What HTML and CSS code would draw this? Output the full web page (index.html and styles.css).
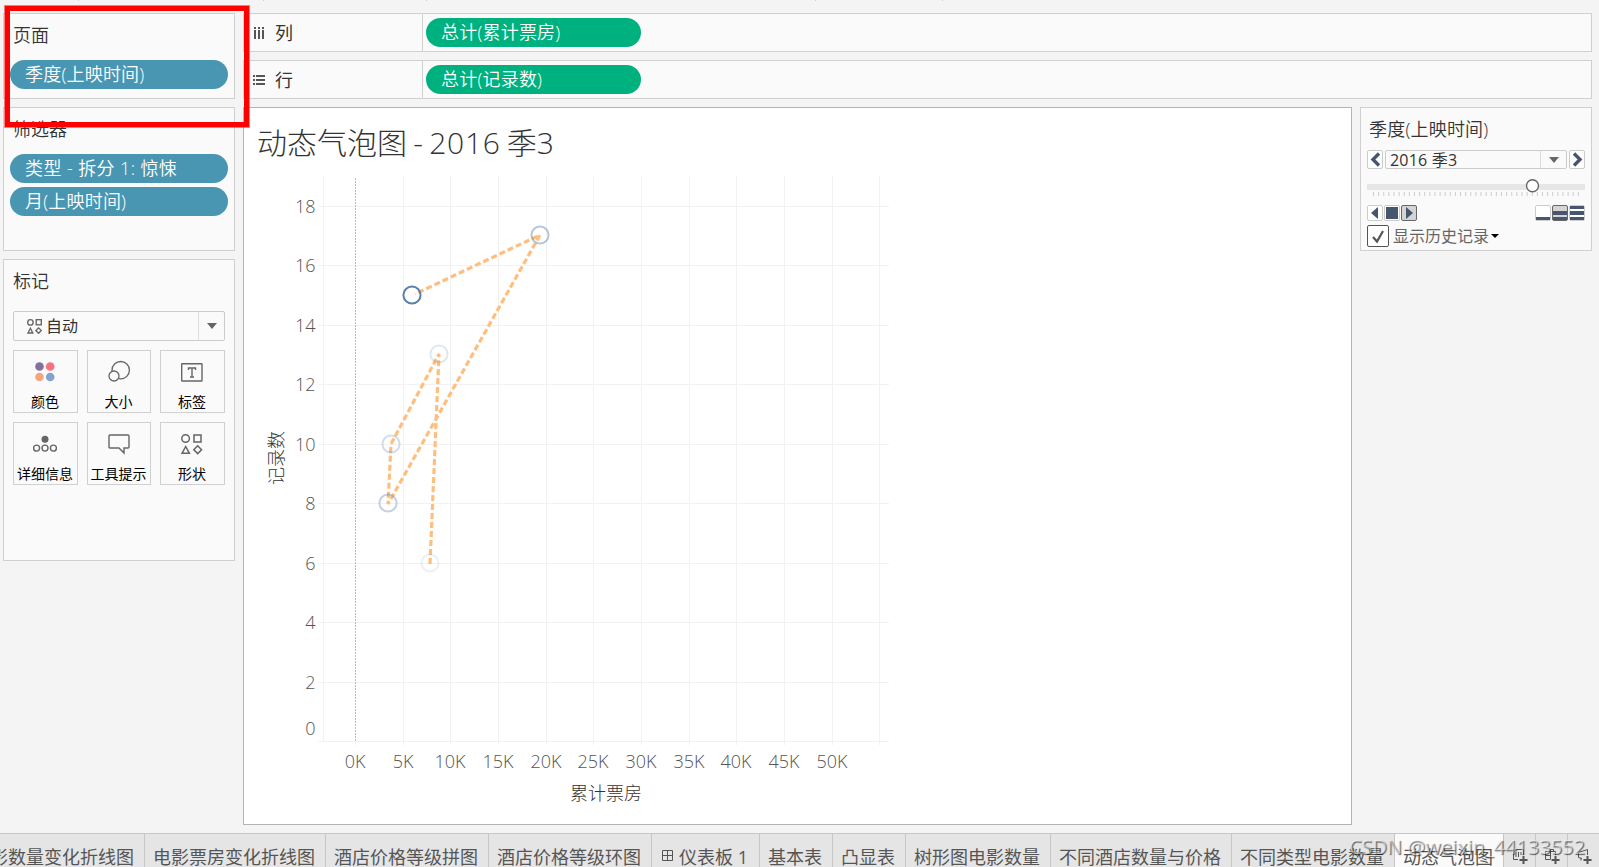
FILE: index.html
```html
<!DOCTYPE html>
<html lang="zh-CN">
<head>
    <meta charset="UTF-8">
    <meta name="viewport" content="width=device-width, initial-scale=1.0">
    <title>动态气泡图</title>
    <link rel="stylesheet" href="styles.css">
</head>
<body>
    <!-- bottom edge of the toolbar separators -->
    <div class="toolbar"><i></i><i></i><i></i><i></i><i></i></div>

    <div class="workspace">
        <div class="cards">
            <div class="card pages">
                <div class="card-title">页面</div>
                <div class="pill blue">季度(上映时间)</div>
            </div>
            <div class="card filters">
                <div class="card-title">筛选器</div>
                <div class="pill blue wide">类型 - 拆分 1: 惊悚</div>
                <div class="pill blue">月(上映时间)</div>
            </div>
            <div class="card marks">
                <div class="card-title">标记</div>
                <div class="mark-type">
                    <svg width="15" height="15" viewBox="0 0 22 22" fill="none" stroke="#666" stroke-width="2">
                        <circle cx="5" cy="5" r="4"/><rect x="13.5" y="1" width="7.5" height="7.5"/>
                        <path d="M1.5 20.5L5 13.5L8.5 20.5Z"/><path d="M17 13L21 17L17 21L13 17Z"/>
                    </svg>
                    <span>自动</span>
                    <div class="arrow"><i></i></div>
                </div>
                <div class="mark-grid">
                    <div class="mark">
                        <svg width="24" height="24" viewBox="0 0 24 24">
                            <circle cx="6.5" cy="6.5" r="4.3" fill="#85709c"/><circle cx="17.2" cy="6.5" r="4.3" fill="#fb7080"/>
                            <circle cx="6.5" cy="17" r="4.3" fill="#f4a77c"/><circle cx="17.2" cy="17" r="4.3" fill="#80a4cb"/>
                        </svg>
                        <span>颜色</span>
                    </div>
                    <div class="mark">
                        <svg width="24" height="24" viewBox="0 0 24 24" fill="#fafafa" stroke="#666" stroke-width="1.3">
                            <circle cx="13.7" cy="10.2" r="8.7"/><circle cx="7" cy="16" r="5"/>
                        </svg>
                        <span>大小</span>
                    </div>
                    <div class="mark">
                        <svg width="24" height="24" viewBox="0 0 24 24" fill="none" stroke="#666" stroke-width="1.4">
                            <rect x="1.7" y="3.7" width="20.3" height="17.3" rx=".5"/>
                            <path d="M8.5 10V8H15.5V10M12 8V17M10 17H14"/>
                        </svg>
                        <span>标签</span>
                    </div>
                    <div class="mark">
                        <svg width="24" height="24" viewBox="0 0 24 24" fill="none" stroke="#666" stroke-width="1.4">
                            <circle cx="12" cy="7.2" r="3.5" fill="#666" stroke="none"/>
                            <circle cx="3.6" cy="16.1" r="3"/><circle cx="12" cy="16.1" r="3"/><circle cx="20.4" cy="16.1" r="3"/>
                        </svg>
                        <span>详细信息</span>
                    </div>
                    <div class="mark">
                        <svg width="24" height="24" viewBox="0 0 24 24" fill="none" stroke="#666" stroke-width="1.4">
                            <path d="M3 3H21Q22 3 22 4V15Q22 16 21 16H17V21L12 16H3Q2 16 2 15V4Q2 3 3 3Z"/>
                        </svg>
                        <span>工具提示</span>
                    </div>
                    <div class="mark">
                        <svg width="24" height="24" viewBox="0 0 24 24" fill="none" stroke="#666" stroke-width="1.5">
                            <circle cx="5.6" cy="6.5" r="3.8"/><rect x="14" y="3" width="7" height="7"/>
                            <path d="M2 21.3L5.7 14.5L9.4 21.3Z"/><path d="M17.7 13.8L21.6 17.7L17.7 21.6L13.8 17.7Z"/>
                        </svg>
                        <span>形状</span>
                    </div>
                </div>
            </div>
        </div>

        <div class="main">
            <div class="shelf">
                <div class="shelf-name">
                    <svg width="12" height="12" viewBox="0 0 12 12" fill="#555"><path d="M1 0h2v2H1zM5 0h2v2H5zM9 0h2v2H9zM1 3h2v9H1zM5 3h2v9H5zM9 3h2v9H9z"/></svg>
                    <span>列</span>
                </div>
                <div class="pill green">总计(累计票房)</div>
            </div>
            <div class="shelf">
                <div class="shelf-name">
                    <svg width="12" height="12" viewBox="0 0 12 12" fill="#555"><path d="M0 1h2v2H0zM0 5h2v2H0zM0 9h2v2H0zM3 1h9v2H3zM3 5h9v2H3zM3 9h9v2H3z"/></svg>
                    <span>行</span>
                </div>
                <div class="pill green">总计(记录数)</div>
            </div>

            <div class="content">
                <div class="view">
                    <h1>动态气泡图 - <span>2016</span> 季3</h1>
                    <svg class="chart" width="680" height="650" viewBox="244 174 680 650">
                        <path class="grid" d="M318 206.5H889M318 265.5H889M318 325.5H889M318 384.5H889M318 444.5H889M318 503.5H889M318 563.5H889M318 622.5H889M318 682.5H889M318 741.5H889"/>
                        <path class="grid" d="M323.5 176V741M403.5 176V745M450.5 176V745M498.5 176V745M546.5 176V745M593.5 176V745M641.5 176V745M689.5 176V745M736.5 176V745M784.5 176V745M832.5 176V745M879.5 176V745M355.5 741V745"/>
                        <path class="zero" d="M355.5 178V741"/>
                        <path class="trail" d="M430 564L439 354L391 444L388 504L540 235L415 294"/>
                        <g class="bubbles">
                            <circle cx="412" cy="295" r="8.6" opacity="0.95"/>
                            <circle cx="540" cy="235" r="8.6" opacity="0.42"/>
                            <circle cx="439" cy="354" r="8.6" opacity="0.18"/>
                            <circle cx="391" cy="444" r="8.6" opacity="0.25"/>
                            <circle cx="388" cy="503" r="8.6" opacity="0.34"/>
                            <circle cx="430" cy="563" r="8.6" opacity="0.11"/>
                        </g>
                        <g class="y-labels">
                            <text x="315.5" y="213">18</text>
                            <text x="315.5" y="272">16</text>
                            <text x="315.5" y="332">14</text>
                            <text x="315.5" y="391">12</text>
                            <text x="315.5" y="451">10</text>
                            <text x="315.5" y="510">8</text>
                            <text x="315.5" y="570">6</text>
                            <text x="315.5" y="629">4</text>
                            <text x="315.5" y="689">2</text>
                            <text x="315.5" y="735">0</text>
                        </g>
                        <g class="x-labels">
                            <text x="355" y="768">0K</text>
                            <text x="403" y="768">5K</text>
                            <text x="450" y="768">10K</text>
                            <text x="498" y="768">15K</text>
                            <text x="546" y="768">20K</text>
                            <text x="593" y="768">25K</text>
                            <text x="641" y="768">30K</text>
                            <text x="689" y="768">35K</text>
                            <text x="736" y="768">40K</text>
                            <text x="784" y="768">45K</text>
                            <text x="832" y="768">50K</text>
                            <text class="axis-title" x="606" y="800">累计票房</text>
                            <text class="axis-title" transform="translate(283 458) rotate(-90)">记录数</text>
                        </g>
                    </svg>
                </div>

                <div class="card player">
                    <div class="player-title">季度(上映时间)</div>
                    <div class="period">
                        <div class="step"><svg width="12" height="15" viewBox="0 0 12 15"><path d="M10 1.5L4 7.5L10 13.5" fill="none" stroke="#47566e" stroke-width="3.4"/></svg></div>
                        <div class="period-select"><span>2016 季3</span><div class="arrow"><i></i></div></div>
                        <div class="step"><svg width="12" height="15" viewBox="0 0 12 15"><path d="M3 1.5L9 7.5L3 13.5" fill="none" stroke="#47566e" stroke-width="3.4"/></svg></div>
                    </div>
                    <svg class="slider" width="218" height="20" viewBox="0 0 218 20">
                        <rect y="7" width="218" height="6" fill="#e6e6e6"/>
                        <path d="M6 17H213" stroke="#ccc" stroke-width="4" stroke-dasharray="1 4.12"/>
                        <circle cx="165.5" cy="8.7" r="6" fill="#fff" stroke="#666" stroke-width="1.4"/>
                    </svg>
                    <div class="controls">
                        <div class="play"><svg width="14" height="14" viewBox="0 0 14 14"><path d="M10 1V13L3 7Z" fill="#47566e"/></svg></div>
                        <div class="play"><svg width="14" height="14" viewBox="0 0 14 14"><path d="M1 1H13V13H1Z" fill="#47566e"/></svg></div>
                        <div class="play on"><svg width="14" height="14" viewBox="0 0 14 14"><path d="M4 1V13L11 7Z" fill="#47566e"/></svg></div>
                        <div class="play speed"><svg width="14" height="14" viewBox="0 0 14 14"><path d="M0 11H14V14H0Z" fill="#47566e"/></svg></div>
                        <div class="play on"><svg width="14" height="14" viewBox="0 0 14 14"><path d="M0 5H14V9H0ZM0 11H14V14H0Z" fill="#47566e"/></svg></div>
                        <div class="play"><svg width="14" height="14" viewBox="0 0 14 14"><path d="M0 0H14V3H0ZM0 5H14V9H0ZM0 11H14V14H0Z" fill="#47566e"/></svg></div>
                    </div>
                    <div class="history">
                        <div class="check"><svg width="20" height="20" viewBox="0 0 20 20"><path d="M5 11L9 15.5L15 5" fill="none" stroke="#555" stroke-width="2.2"/></svg></div>
                        <span>显示历史记录</span>
                        <i></i>
                    </div>
                </div>
            </div>
        </div>
    </div>

    <div class="tabs">
        <div class="tab first"><span>影数量变化折线图</span></div>
        <div class="tab w181">电影票房变化折线图</div>
        <div class="tab w163">酒店价格等级拼图</div>
        <div class="tab w163">酒店价格等级环图</div>
        <div class="tab w108 dash"><svg width="11" height="11" viewBox="0 0 11 11" fill="none" stroke="#555"><path d="M.5 .5H10.5V10.5H.5ZM5.5 .5V10.5M.5 5.5H10.5"/></svg>仪表板 1</div>
        <div class="tab w73">基本表</div>
        <div class="tab w73">凸显表</div>
        <div class="tab w145">树形图电影数量</div>
        <div class="tab w181">不同酒店数量与价格</div>
        <div class="tab w163">不同类型电影数量</div>
        <div class="tab w109 active">动态气泡图</div>
        <div class="tab add"><svg width="16" height="17" viewBox="0 0 16 17" fill="none" stroke="#555"><path d="M6 11.5H1.5V1.5H11.5V7M4 4V9M6.5 4V9M9 4V7"/><path d="M11.5 8V16M7.5 12H15.5" stroke-width="2"/></svg></div>
        <div class="tab add"><svg width="16" height="17" viewBox="0 0 16 17" fill="none" stroke="#555"><path d="M6 11.5H1.5V3.5H11.5V7M6.5 3.5V1.5H9.5V3.5M6.5 3.5V11.5M1.5 7.5H6.5"/><path d="M11.5 8V16M7.5 12H15.5" stroke-width="2"/></svg></div>
        <div class="tab add"><svg width="16" height="17" viewBox="0 0 16 17" fill="none" stroke="#555"><path d="M6 10.5L2.5 9.5V4.5L11.5 1.5V7M5 10V12.5"/><path d="M11.5 8V16M7.5 12H15.5" stroke-width="2"/></svg></div>
    </div>

    <!-- overlays -->
    <div class="highlight"></div>
    <div class="watermark">CSDN @weixin_44133552</div>
</body>
</html>
```
FILE: styles.css
```css
* {
    box-sizing: border-box;
}

body {
    margin: 0;
    height: 867px;
    overflow: hidden;
    position: relative;
    display: flex;
    flex-direction: column;
    background-color: #f4f4f4;
    color: #333;
    font-family: "Open Sans", "Noto Sans CJK SC", sans-serif;
    font-size: 18px;
    line-height: 24px;
    white-space: nowrap;
}

svg {
    display: block;
    flex: none;
}

.toolbar {
    width: 943px;
    height: 1px;
    flex: none;
    display: grid;
    grid-template-columns: 79px 185px 163px 389px 127px;
}

.toolbar i {
    border-right: 1px solid #d0d0d0;
}

.workspace {
    height: 832px;
    flex: none;
    display: flex;
    gap: 8px;
    padding: 12px 7px 7px 3px;
}

/* left column */
.cards {
    width: 232px;
    display: flex;
    flex-direction: column;
    gap: 8px;
}

.card {
    background-color: #fafafa;
    border: 1px solid #d0d0d0;
}

.card-title {
    padding: 9px 0 0 9px;
    height: 46px;
    font-weight: 350;
}

.pages {
    height: 86px;
}

.filters {
    height: 144px;
}

.marks {
    height: 302px;
}

.pill {
    height: 29px;
    border-radius: 15px;
    padding-left: 15px;
    line-height: 29px;
    color: #fff;
    font-weight: 350;
    letter-spacing: 0.2px;
}

.blue {
    width: 218px;
    margin: 0 0 4px 6px;
    background-color: #4996b2;
}

.wide {
    letter-spacing: 0.4px;
}

.green {
    width: 215px;
    margin-left: 3px;
    background-color: #00b180;
}

.mark-type {
    width: 212px;
    height: 30px;
    margin: 5px 0 9px 9px;
    padding-left: 13px;
    border: 1px solid #ccc;
    border-radius: 2px;
    display: flex;
    align-items: center;
    gap: 4px;
    font-size: 16px;
}

.arrow {
    width: 26px;
    height: 100%;
    margin-left: auto;
    border-left: 1px solid #ddd;
    display: flex;
    align-items: center;
    justify-content: center;
}

.arrow i {
    border: 5px solid transparent;
    border-top: 6px solid #666;
    border-bottom: 0;
}

.mark-grid {
    margin-left: 9px;
    display: grid;
    grid-template-columns: 65px 64px 65px;
    gap: 9px;
}

.mark {
    height: 63px;
    padding: 9px 1px 0 0;
    border: 1px solid #d0d0d0;
    display: flex;
    flex-direction: column;
    align-items: center;
    gap: 8px;
    font-size: 14px;
    line-height: 20px;
    color: #000;
}

/* shelves */
.main {
    flex: 1;
    display: flex;
    flex-direction: column;
    gap: 8px;
}

.shelf {
    height: 39px;
    background-color: #fafafa;
    border: 1px solid #d0d0d0;
    display: flex;
    align-items: center;
}

.shelf-name {
    width: 179px;
    height: 100%;
    padding-left: 9px;
    border-right: 1px solid #d0d0d0;
    display: flex;
    align-items: center;
    gap: 10px;
}

.content {
    flex: 1;
    display: flex;
    align-items: flex-start;
    gap: 8px;
}

/* chart */
.view {
    width: 1109px;
    height: 718px;
    flex: none;
    background-color: #fff;
    border: 1px solid #b4b4b4;
}

.view h1 {
    margin: 0;
    height: 66px;
    padding: 13px 0 0 13px;
    font-size: 30px;
    line-height: 44px;
    font-weight: 300;
    word-spacing: -1.5px;
}

.view h1 span {
    letter-spacing: 0.7px;
}

.grid {
    fill: none;
    stroke: #f2f2f2;
}

.zero {
    stroke: #bbb;
    stroke-dasharray: 2 1;
}

.bubbles circle {
    fill: none;
    stroke: #4e79a7;
    stroke-width: 2;
}

.trail {
    fill: none;
    stroke: #ffbe7d;
    stroke-width: 3.2;
    stroke-dasharray: 6 3;
}

.chart text {
    font-size: 18px;
    font-weight: 300;
    fill: #555;
}

.y-labels {
    text-anchor: end;
}

.x-labels {
    text-anchor: middle;
}

.chart .axis-title {
    fill: #333;
}

/* page player */
.player {
    flex: 1;
    height: 144px;
    padding: 9px 6px 0;
}

.player-title {
    height: 33px;
    padding-left: 2px;
    font-weight: 350;
    letter-spacing: 0.2px;
}

.period {
    display: flex;
    gap: 2px;
}

.step {
    width: 16px;
    height: 19px;
    border: 1px solid #ccc;
    border-radius: 2px;
    background-color: #fff;
    display: flex;
    align-items: center;
    justify-content: center;
}

.period-select {
    flex: 1;
    height: 19px;
    padding-left: 4px;
    border: 1px solid #ccc;
    border-radius: 2px;
    display: flex;
    align-items: center;
    font-size: 16px;
    letter-spacing: 0.2px;
}

.slider {
    margin-top: 8px;
}

.controls {
    margin-top: 8px;
    display: flex;
    gap: 1px;
}

.play {
    width: 16px;
    height: 16px;
    border: 1px solid #ccc;
    border-radius: 2px;
    background-color: #fff;
}

.play.on {
    background-color: #d4d4d4;
    border-color: #666;
}

.play.speed {
    margin-left: auto;
}

.history {
    margin-top: 4px;
    display: flex;
    align-items: center;
    gap: 4px;
    font-size: 16px;
    line-height: 22px;
    color: #666;
}

.check {
    width: 22px;
    height: 22px;
    border: 1px solid #555;
    border-radius: 2px;
    background-color: #fff;
}

.history i {
    margin-left: -2px;
    border: 4px solid transparent;
    border-top: 4px solid #000;
    border-bottom: 0;
}

/* bottom tabs */
.tabs {
    height: 34px;
    flex: none;
    display: flex;
    border-top: 1px solid #c6c6c6;
    background-color: #e5e5e5;
}

.tab {
    flex: none;
    border-right: 1px solid #c6c6c6;
    padding: 11px 0 0 8px;
    color: #555;
    overflow: hidden;
}

.first {
    width: 145px;
    padding: 11px 10px 0 0;
    display: flex;
    justify-content: flex-end;
}

.w73 {
    width: 73px;
}

.w108 {
    width: 108px;
}

.w109 {
    width: 109px;
}

.w145 {
    width: 145px;
}

.w163 {
    width: 163px;
}

.w181 {
    width: 181px;
}

.dash {
    padding-left: 10px;
    display: flex;
    gap: 6px;
}

.dash svg {
    margin-top: 5px;
}

.active {
    background-color: #fafafa;
}

.add {
    width: 32px;
    padding: 14px 0 0 8px;
}

.highlight {
    position: absolute;
    left: 5px;
    top: 6px;
    width: 244px;
    height: 121px;
    border: 5px solid #f00;
    box-shadow: 0 0 0 1px rgba(255, 0, 0, 0.5);
}

.watermark {
    position: absolute;
    right: 14px;
    top: 835px;
    font-size: 20px;
    color: rgba(255, 255, 255, 0.5);
    text-shadow: 1px 1px 1px rgba(0, 0, 0, 0.6);
}
```
